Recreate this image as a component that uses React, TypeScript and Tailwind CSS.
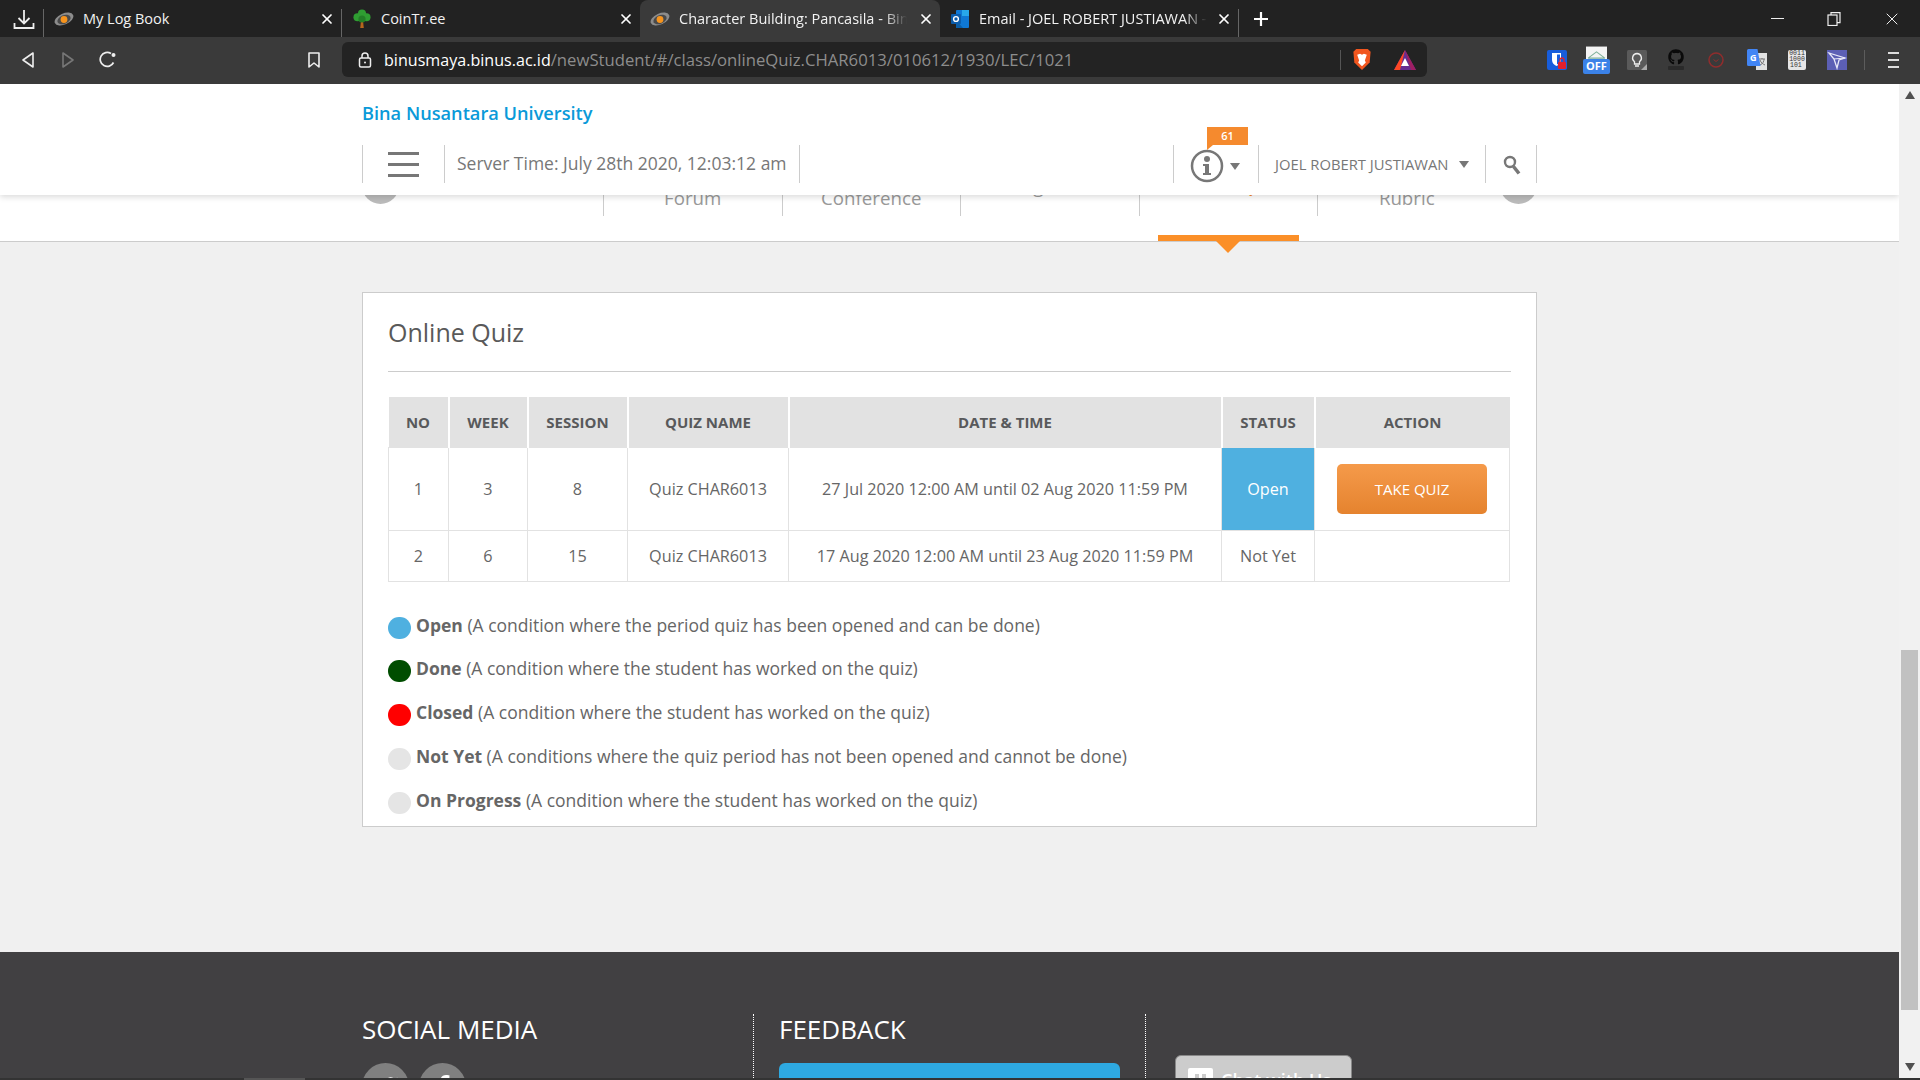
import { X } from 'lucide-react'
import { FaTwitter, FaFacebookF, FaGithub } from 'react-icons/fa'

function EyeIcon() {
  return (
    <svg viewBox="0 0 20 16" className="h-[16px] w-[20px] shrink-0">
      <ellipse cx="10" cy="8" rx="10" ry="5.500" transform="rotate(-24 10 8)" fill="#8c8c8c" />
      <ellipse cx="10" cy="8.500" rx="7" ry="4.300" transform="rotate(-24 10 8.500)" fill="#4a4a4a" />
      <circle cx="10" cy="8.500" r="3.400" fill="#f7941d" />
    </svg>
  )
}

function TreeIcon() {
  return (
    <svg viewBox="0 0 20 22" className="h-[20px] w-[18px] shrink-0">
      <path d="M9 12h2l1 9H8z" fill="#b5651d" />
      <circle cx="10" cy="5" r="4.500" fill="#2f9e32" />
      <circle cx="5" cy="9" r="4.500" fill="#2f9e32" />
      <circle cx="15" cy="9" r="4.500" fill="#2f9e32" />
      <circle cx="10" cy="11" r="4" fill="#237f27" />
    </svg>
  )
}

function OutlookIcon() {
  return (
    <svg viewBox="0 0 20 20" className="h-[20px] w-[20px] shrink-0">
      <rect x="6" y="1" width="13" height="18" rx="1" fill="#0f78d4" />
      <rect x="12" y="1" width="7" height="6" fill="#28a8ea" />
      <path d="M6 11l7 8H7a1 1 0 0 1-1-1z" fill="#0a5ea8" />
      <rect x="1" y="5" width="10" height="10" rx="1" fill="#0b5cab" />
      <circle cx="6" cy="10" r="2.400" fill="none" stroke="#fff" strokeWidth="1.400" />
    </svg>
  )
}

function BrowserTab({ icon, label, active, fade, textWidth, width }: { icon: React.ReactNode; label: string; active?: boolean; fade?: boolean; textWidth: string; width: string }) {
  return (
    <div className={`flex h-full items-center pl-[10px] ${width} ${active ? 'rounded-t-[8px] bg-[#3a3a3a]' : ''}`}>
      <div className="flex w-[20px] justify-center">{icon}</div>
      <div className={`ml-[9px] overflow-hidden whitespace-nowrap text-[14.500px] text-[#f2f2f2] ${textWidth} ${fade ? '[mask-image:linear-gradient(to_right,black_90%,transparent)]' : ''}`}>
        {label}
      </div>
      <X size={16} strokeWidth={2.600} className="ml-auto mr-[6px] text-white" />
    </div>
  )
}

function TabBar() {
  return (
    <div className="flex h-[37px] items-end bg-[#222222]">
      <div className="flex h-[37px] w-[43px] items-center justify-center">
        <svg viewBox="0 0 22 22" className="ml-[4px] h-[22px] w-[22px]" fill="none" stroke="#eee" strokeWidth="1.800">
          <path d="M11 2v13M5.500 10l5.500 5.500 5.500-5.500M1.500 15v5h19v-5" />
        </svg>
      </div>
      <div className="mb-0 h-[28px] w-px bg-[#666]" />
      <div className="flex h-full w-[297px]">
        <BrowserTab icon={<EyeIcon />} label="My Log Book" textWidth="w-[220px]" width="w-full" />
      </div>
      <div className="h-[28px] w-px bg-[#666]" />
      <div className="flex h-full w-[298px]">
        <BrowserTab icon={<TreeIcon />} label="CoinTr.ee" textWidth="w-[220px]" width="w-full" />
      </div>
      <BrowserTab icon={<EyeIcon />} label="Character Building: Pancasila - Binus Maya" active fade textWidth="w-[228px]" width="w-[300px]" />
      <BrowserTab icon={<OutlookIcon />} label="Email - JOEL ROBERT JUSTIAWAN - Outlook" fade textWidth="w-[228px]" width="w-[298px]" />
      <div className="h-[28px] w-px bg-[#666]" />
      <svg viewBox="0 0 16 16" className="ml-[14px] mb-[10px] h-[16px] w-[16px]" stroke="#fff" strokeWidth="2.200">
        <path d="M8 1v14M1 8h14" />
      </svg>
      <div className="ml-auto flex h-full items-center text-[#eee]">
        <div className="mr-[43px] h-[1.500px] w-[13px] bg-[#eee]" />
        <svg viewBox="0 0 14 14" className="mr-[41px] h-[14px] w-[14px]" fill="none" stroke="#eee" strokeWidth="1.200">
          <rect x="1" y="3" width="9" height="10.500" />
          <path d="M4 3V.700h9v10h-3" />
        </svg>
        <X size={20} strokeWidth={1.200} className="mr-[18px]" />
      </div>
    </div>
  )
}

function ExtensionIcons() {
  return (
    <div className="ml-[120px] flex items-center">
      <svg viewBox="0 0 20 20" className="h-[20px] w-[20px]">
        <rect width="20" height="20" rx="2" fill="#175ddc" />
        <path d="M5 3h9v7c0 3-2 5-4.500 6C7 15 5 13 5 10z" fill="#fff" />
        <path d="M10 4.500h3V10c0 2-1.500 3.500-3 4.500z" fill="#175ddc" />
        <rect x="11" y="12" width="8" height="7" rx="1" fill="#e0202c" />
        <path d="M13 12V10a2 2 0 0 1 4 0v2" fill="none" stroke="#e0202c" strokeWidth="1.300" />
      </svg>
      <div className="relative ml-[16px] h-[28px] w-[27px]">
        <svg viewBox="0 0 20 18" className="ml-[3px] h-[20px] w-[21px]">
          <rect width="20" height="18" fill="#f4f4f4" />
          <path d="M2 11l8-6 8 6M2 11h16" fill="none" stroke="#7fb09a" strokeWidth="1" />
        </svg>
        <div className="absolute bottom-0 left-0 flex h-[15px] w-[27px] items-center justify-center rounded-[2px] bg-[#3b82e8] text-[11px] font-bold text-white">
          OFF
        </div>
      </div>
      <svg viewBox="0 0 20 20" className="ml-[17px] h-[20px] w-[20px]">
        <rect width="20" height="20" rx="1.500" fill="#5a5a5a" />
        <path d="M10 3.500a4.500 4.500 0 0 0-2.500 8.200V14h5v-2.300A4.500 4.500 0 0 0 10 3.500zM8 16h4" fill="none" stroke="#eee" strokeWidth="1.300" />
        <path d="M20 14v6h-6z" fill="#aaa" />
      </svg>
      <div className="ml-[21px] flex w-[16px] flex-col items-center gap-[1px]">
        <FaGithub size={16} color="#0a0a0a" />
        <div className="h-[4px] w-[16px] rounded-[1px] bg-[#2a2a2a]" />
      </div>
      <svg viewBox="0 0 16 16" className="ml-[24px] h-[16px] w-[16px]" fill="none" stroke="#8f2d2d" strokeWidth="1.500">
        <circle cx="8" cy="8" r="7" />
        <path d="M5.500 7.500L8 9.500l2.500-2" strokeWidth="1" />
      </svg>
      <svg viewBox="0 0 20 21" className="ml-[23px] h-[21px] w-[20px]">
        <rect x="9" y="4" width="11" height="17" fill="#e2e2e2" />
        <path d="M12 10h6M15 9v1M13 16c3-1 4-4 4-6M13 11c1 3 3 4 5 5" fill="none" stroke="#777" strokeWidth="1" />
        <path d="M1.500 0h9l3 17H1.500A1.500 1.500 0 0 1 0 15.500V1.500A1.500 1.500 0 0 1 1.500 0z" fill="#4285f4" />
        <text x="3" y="12" fontSize="9" fontWeight="700" fill="#fff" fontFamily="Open Sans, sans-serif">G</text>
      </svg>
      <div className="ml-[21px] flex h-[20px] w-[18px] flex-col items-center justify-center rounded-[2px] bg-[#e6e6e6] font-['Liberation_Mono',monospace] text-[6.500px] leading-[6px] text-[#333]">
        <span>0011</span>
        <span>1000</span>
        <span className="self-start pl-[2px]">101</span>
      </div>
      <svg viewBox="0 0 20 20" className="ml-[21px] h-[20px] w-[20px]">
        <rect width="20" height="20" fill="#5c5fb5" />
        <path d="M2 3l16 5-6 2-2 8-3-9z" fill="none" stroke="#e8e8f8" strokeWidth="1.300" />
        <path d="M7 9l11-1" stroke="#e8e8f8" strokeWidth="1" />
      </svg>
      <div className="ml-[17px] h-[20px] w-px bg-[#5c5c5c]" />
      <div className="ml-[23px] flex w-[11px] flex-col gap-[5px]">
        <div className="h-[2px] bg-[#ddd]" />
        <div className="h-[2px] bg-[#ddd]" />
        <div className="h-[2px] bg-[#ddd]" />
      </div>
    </div>
  )
}

function Toolbar() {
  return (
    <div className="flex h-[47px] items-center bg-[#3a3a3a] pb-[2px]">
      <svg viewBox="0 0 12 16" className="ml-[22px] h-[16px] w-[12px]" fill="none" stroke="#eee" strokeWidth="1.600" strokeLinejoin="round">
        <path d="M11 1v14L1 8z" />
      </svg>
      <svg viewBox="0 0 12 16" className="ml-[28px] h-[16px] w-[12px]" fill="none" stroke="#777" strokeWidth="1.600" strokeLinejoin="round">
        <path d="M1 1v14l10-7z" />
      </svg>
      <svg viewBox="0 0 17 17" className="ml-[25px] h-[17px] w-[17px]" fill="none" stroke="#eee" strokeWidth="1.700">
        <path d="M14.500 11.500A7 7 0 1 1 12 2.500" />
        <circle cx="14.500" cy="4" r="2" fill="#eee" stroke="none" />
      </svg>
      <svg viewBox="0 0 12 16" className="ml-[192px] h-[16px] w-[12px]" fill="none" stroke="#eee" strokeWidth="1.600" strokeLinejoin="round">
        <path d="M1 1h10v14L6 11l-5 4z" />
      </svg>
      <div className="ml-[22px] flex h-[35px] w-[1085px] items-center rounded-[6px] bg-[#232323]">
        <svg viewBox="0 0 14 16" className="ml-[16px] h-[16px] w-[14px]" fill="none" stroke="#eee" strokeWidth="1.500">
          <rect x="1.500" y="6" width="11" height="9" rx="1.500" />
          <path d="M4 6V4a3 3 0 0 1 6 0v2" />
          <circle cx="7" cy="10.500" r="1" fill="#eee" stroke="none" />
        </svg>
        <div className="ml-[12px] w-[900px] whitespace-nowrap text-[16.700px] text-[#8d8d8d]">
          <span className="text-[16.100px] text-white">binusmaya.binus.ac.id</span>/newStudent/#/class/onlineQuiz.CHAR6013/010612/1930/LEC/1021
        </div>
        <div className="ml-auto h-[20px] w-px bg-[#555]" />
        <svg viewBox="0 0 20 24" className="ml-[11px] h-[23px] w-[20px]">
          <path d="M4 1h12l3 3-1 11-8 8-8-8L1 4z" fill="#f1561f" />
          <path d="M5 7l3-1 2 1 2-1 3 1-2 6 1 2-4 4-4-4 1-2z" fill="#fff" />
        </svg>
        <svg viewBox="0 0 22 22" className="ml-[22px] mr-[11px] h-[22px] w-[22px]">
          <path d="M11 1L0 21h22z" fill="#662d91" />
          <path d="M11 1L0 21h6z" fill="#ff4724" />
          <path d="M11 1l11 20h-5z" fill="#9e1f63" />
          <path d="M11 9l-4 8h8z" fill="#fff" />
        </svg>
      </div>
      <ExtensionIcons />
    </div>
  )
}

function SiteHeader() {
  return (
    <div className="absolute inset-x-0 top-0 z-10 h-[111px] bg-white shadow-[0_2px_6px_rgba(0,0,0,0.15)]">
      <div className="mx-auto w-[1175px] pt-[17px]">
        <div className="text-[18.200px] leading-[24px] font-semibold text-[#0a9ad9]">Bina Nusantara University</div>
        <div className="mt-[20px] flex h-[38px] items-center text-[#777]">
          <div className="flex h-full w-[82px] items-center justify-center border-l border-[#ccc]">
            <div className="flex w-[31px] flex-col gap-[8px]">
              <div className="h-[3px] bg-[#777]" />
              <div className="h-[3px] bg-[#777]" />
              <div className="h-[3px] bg-[#777]" />
            </div>
          </div>
          <div className="flex h-full w-[356px] items-center border-x border-[#ccc] pb-[2px] pl-[12px] text-[17.500px] whitespace-nowrap text-[#777]">
            Server Time: July 28th 2020, 12:03:12 am
          </div>
          <div className="ml-auto flex h-full">
            <div className="relative flex w-[85px] items-center border-l border-[#ccc] pt-[4px] pl-[16px]">
              <svg viewBox="0 0 34 34" className="h-[34px] w-[34px]" fill="#777">
                <circle cx="17" cy="17" r="15" fill="none" stroke="#777" strokeWidth="2.500" />
                <circle cx="17" cy="10" r="3" />
                <path d="M13 15h6v9h2v2h-8v-2h2v-7h-2z" />
              </svg>
              <div className="ml-[6px] h-0 w-0 border-x-[5px] border-t-[7px] border-x-transparent border-t-[#777]" />
              <div className="absolute -top-[18px] left-[33px] flex h-[18px] w-[41px] items-center justify-center bg-[#f58a2e] text-[11px] font-semibold text-white">
                61
              </div>
              <div className="absolute top-0 left-[33px] h-0 w-0 border-t-[5px] border-r-[6px] border-t-[#f58a2e] border-r-transparent" />
            </div>
            <div className="flex w-[227px] items-center border-l border-[#ccc] pt-[1px] pl-[16px] text-[14.800px] whitespace-nowrap text-[#777]">
              JOEL ROBERT JUSTIAWAN
              <div className="ml-[10px] h-0 w-0 border-x-[5px] border-t-[7px] border-x-transparent border-t-[#777]" />
            </div>
            <div className="flex w-[52px] items-center justify-center border-x border-[#ccc] pt-[1px] pl-[1px]">
              <svg viewBox="0 0 18 20" className="h-[20px] w-[18px]" fill="none" stroke="#777">
                <circle cx="7" cy="7" r="5" strokeWidth="2.400" />
                <path d="M10.500 11.500L16 18.500" strokeWidth="3.500" />
              </svg>
            </div>
          </div>
        </div>
      </div>
    </div>
  )
}

function CourseTabs() {
  const tabs = ['Course Outline', 'Discussion Forum', 'Video Conference', 'Assignment', 'Online Quiz', 'Assessment Rubric']
  return (
    <div className="h-[158px] border-b-[1.500px] border-[#ccc] bg-white pt-[76px]">
      <div className="mx-auto flex w-[1175px] items-start">
        <div className="mt-[7px] h-[37px] w-[37px] rounded-full bg-[#bbb]" />
        <div className="ml-[25.500px] flex">
          {tabs.map((tab, i) => (
            <div
              key={tab}
              className={`relative flex h-[56px] w-[178.500px] items-center justify-center pb-[4px] text-center text-[18.700px] leading-[24px] ${i > 0 ? 'border-l border-[#ccc]' : ''} ${i === 4 ? 'text-[#f58a2e]' : 'text-[#999]'}`}
            >
              <span className={i === 1 || i === 2 || i === 5 ? 'w-[110px]' : 'whitespace-nowrap'}>{tab}</span>
              {i === 4 && (
                <div className="absolute top-[75px] left-[18px] flex h-[6px] w-[141px] justify-center bg-[#fb8f28]">
                  <div className="mt-[6px] h-0 w-0 border-x-[12px] border-t-[12px] border-x-transparent border-t-[#fb8f28]" />
                </div>
              )}
            </div>
          ))}
        </div>
        <div className="mt-[7px] ml-auto h-[37px] w-[37px] rounded-full bg-[#bbb]" />
      </div>
    </div>
  )
}

const legend = [
  { name: 'Open', desc: '(A condition where the period quiz has been opened and can be done)', color: 'bg-[#4fb0e0]' },
  { name: 'Done', desc: '(A condition where the student has worked on the quiz)', color: 'bg-[#004d00]' },
  { name: 'Closed', desc: '(A condition where the student has worked on the quiz)', color: 'bg-[#ff0000]' },
  { name: 'Not Yet', desc: '(A conditions where the quiz period has not been opened and cannot be done)', color: 'bg-[#e5e5e5]' },
  { name: 'On Progress', desc: '(A condition where the student has worked on the quiz)', color: 'bg-[#e5e5e5]' },
]

function QuizCard() {
  const th = 'border-x-2 border-white font-bold first:border-l-0 last:border-r-0'
  const td = 'border border-[#e2e2e2] pt-[2px]'
  return (
    <div className="mx-auto h-[535px] w-[1175px] border-[1.500px] border-[#ccc] bg-white px-[25px]">
      <div className="flex h-[79px] items-center border-b-[1.500px] border-[#ccc] pt-[1px] text-[25px] text-[#595959]">Online Quiz</div>
      <table className="mt-[25px] w-[1121px] table-fixed border-collapse text-center text-[16.200px] text-[#666]">
        <colgroup>
          <col className="w-[60px]" />
          <col className="w-[79px]" />
          <col className="w-[100px]" />
          <col className="w-[161px]" />
          <col className="w-[433px]" />
          <col className="w-[93px]" />
          <col className="w-[195px]" />
        </colgroup>
        <thead>
          <tr className="h-[50px] bg-[#e2e2e2] text-[15px] text-[#58595b]">
            <th className={th}>NO</th>
            <th className={th}>WEEK</th>
            <th className={th}>SESSION</th>
            <th className={th}>QUIZ NAME</th>
            <th className={th}>DATE &amp; TIME</th>
            <th className={th}>STATUS</th>
            <th className={th}>ACTION</th>
          </tr>
        </thead>
        <tbody>
          <tr className="h-[83px]">
            <td className={td}>1</td>
            <td className={td}>3</td>
            <td className={td}>8</td>
            <td className={td}>Quiz CHAR6013</td>
            <td className={td}>27 Jul 2020 12:00 AM until 02 Aug 2020 11:59 PM</td>
            <td className={`${td} bg-[#4fb0e0] text-white`}>Open</td>
            <td className="border border-[#e2e2e2]">
              <button className="h-[50px] w-[150px] rounded-[5px] bg-gradient-to-b from-[#f59a4a] to-[#e5832e] pt-[2px] text-[15px] text-white">TAKE QUIZ</button>
            </td>
          </tr>
          <tr className="h-[51px]">
            <td className={td}>2</td>
            <td className={td}>6</td>
            <td className={td}>15</td>
            <td className={td}>Quiz CHAR6013</td>
            <td className={td}>17 Aug 2020 12:00 AM until 23 Aug 2020 11:59 PM</td>
            <td className={td}>Not Yet</td>
            <td className={td} />
          </tr>
        </tbody>
      </table>
      <div className="mt-[31px] flex flex-col gap-[19.900px]">
        {legend.map((item) => (
          <div key={item.name} className="flex h-[24px] items-start text-[17.500px] leading-[24px] whitespace-nowrap text-[#666]">
            <div className={`mt-[4px] mr-[5px] h-[22px] w-[23px] rounded-full ${item.color}`} />
            <span>
              <b className="font-bold">{item.name}</b> {item.desc}
            </span>
          </div>
        ))}
      </div>
    </div>
  )
}

function Footer() {
  return (
    <div className="h-[126px] overflow-hidden bg-[#414042] pt-[62px]">
      <div className="mx-auto flex h-[64px] w-[1175px] text-white">
        <div className="w-[392px] border-r border-dotted border-white">
          <div className="text-[26px] leading-[30px]">SOCIAL MEDIA</div>
          <div className="mt-[19px] flex gap-[10px]">
            <div className="flex h-[47px] w-[47px] items-center justify-center rounded-full bg-[#808080]">
              <FaTwitter size={24} />
            </div>
            <div className="flex h-[47px] w-[47px] items-center justify-center rounded-full bg-[#808080]">
              <FaFacebookF size={24} />
            </div>
          </div>
        </div>
        <div className="w-[392px] border-r border-dotted border-white pl-[25px]">
          <div className="text-[26px] leading-[30px]">FEEDBACK</div>
          <div className="mt-[19px] h-[50px] w-[341px] rounded-t-[6px] bg-[#2ea9e1]" />
        </div>
        <div className="pl-[29px]">
          <div className="mt-[41px] flex h-[50px] w-[177px] items-start gap-[8px] rounded-[6px] border border-[#888] bg-[#cccccc] px-[12px] pt-[12px] text-[18px] leading-[24px] font-semibold">
            <div className="flex h-[22px] w-[25px] justify-center gap-[3px] rounded-[2px] bg-white pt-[6px]">
              <div className="h-[4px] w-[4px] bg-[#ccc]" />
              <div className="h-[4px] w-[4px] bg-[#ccc]" />
            </div>
            <span className="whitespace-nowrap">Chat with Us</span>
          </div>
        </div>
      </div>
    </div>
  )
}

function Scrollbar() {
  return (
    <div className="flex w-[21px] shrink-0 flex-col items-center bg-[#f1f1f1] pt-[7px]">
      <div className="h-0 w-0 border-x-[5px] border-b-[8px] border-x-transparent border-b-[#505050]" />
      <div className="mt-[551px] h-[360px] w-[17px] bg-[#c1c1c1]" />
      <div className="mt-[53px] h-0 w-0 border-x-[5px] border-t-[8px] border-x-transparent border-t-[#505050]" />
    </div>
  )
}

export default function App() {
  return (
    <div className="flex h-screen flex-col overflow-hidden font-['Open_Sans',sans-serif]">
      <TabBar />
      <Toolbar />
      <div className="flex h-[994px] shrink-0">
        <div className="relative min-w-0 flex-1 overflow-hidden bg-[#f0f0f0]">
          <SiteHeader />
          <CourseTabs />
          <div className="h-[710px] pt-[50px]">
            <QuizCard />
          </div>
          <Footer />
        </div>
        <Scrollbar />
      </div>
      <div className="flex h-[2px] bg-[#333]">
        <div className="ml-[244px] w-[61px] bg-[#555]" />
      </div>
    </div>
  )
}
